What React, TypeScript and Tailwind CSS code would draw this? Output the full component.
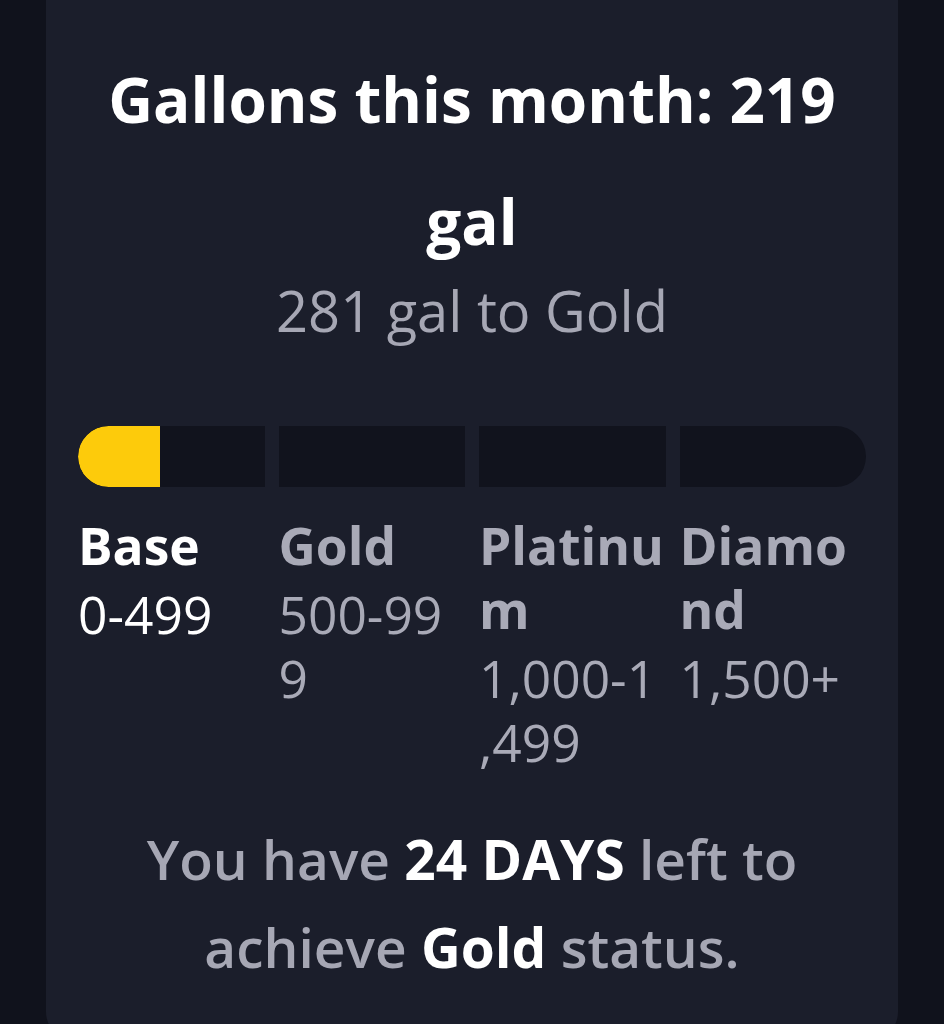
const tiers = [
  { name: "Base", range: "0-499", current: true },
  { name: "Gold", range: "500-999", current: false },
  { name: "Platinum", range: "1,000-1,499", current: false },
  { name: "Diamond", range: "1,500+", current: false },
];

const gallons = 219;
const firstTierMax = 500;

export default function App() {
  const fill = Math.min(100, (gallons / firstTierMax) * 100);

  return (
    <div className="min-h-screen bg-[#10121c] px-[46px] font-['Open_Sans',sans-serif]">
      <div className="min-h-[1040px] rounded-b-[28px] bg-[#1b1e2b] px-[32px] pt-[38px] pb-10">
        <h2 className="text-center text-[62px] leading-[122px] font-bold text-white">
          Gallons this month: {gallons} gal
        </h2>
        <p className="text-center text-[56px] leading-none text-[#a6a7b4]">281 gal to Gold</p>

        <div className="mt-[88px] grid grid-cols-4 gap-[14px] overflow-hidden rounded-full">
          {tiers.map((tier, i) => (
            <div key={tier.name} className="h-[61px] bg-[#11131d]">
              {i === 0 && (
                <div className="h-full rounded-l-full bg-[#fdcb0b]" style={{ width: `${fill}%` }} />
              )}
            </div>
          ))}
        </div>

        <div className="mt-[26px] grid grid-cols-4 gap-[14px]">
          {tiers.map((tier) => (
            <div
              key={tier.name}
              className={`[line-break:anywhere] break-all text-[51.5px] leading-[64px] ${tier.current ? "text-white" : "text-[#a9aab7]"}`}
            >
              <div className="font-bold">{tier.name}</div>
              <div className="mt-[5px]">{tier.range}</div>
            </div>
          ))}
        </div>

        <p className="mt-[41px] text-center text-[55px] leading-[88px] font-semibold text-[#a6a7b4]">
          You have <span className="font-bold text-white">24 DAYS</span> left to achieve{" "}
          <span className="font-bold text-white">Gold</span> status.
        </p>
      </div>
    </div>
  );
}
